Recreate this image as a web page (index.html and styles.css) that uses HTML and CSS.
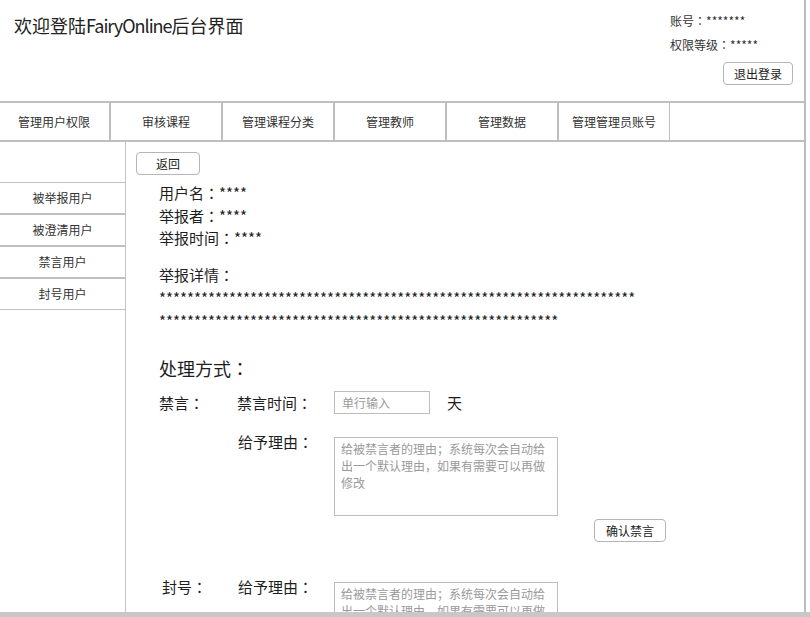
FILE: index.html
```html
<!DOCTYPE html>
<html lang="zh-CN">
<head>
<meta charset="utf-8">
<title>FairyOnline后台</title>
<link rel="stylesheet" href="styles.css">
</head>
<body>
<div class="page">
  <header class="header">
    <h1 class="title">欢迎登陆<span class="latin">FairyOnline</span>后台界面</h1>
    <div class="account">
      <div class="account-line">账号<span class="c" lang="zh-TW">：</span>*******</div>
      <div class="account-line">权限等级<span class="c" lang="zh-TW">：</span>*****</div>
      <div class="account-actions"><button class="btn btn-logout">退出登录</button></div>
    </div>
  </header>
  <nav class="nav">
    <ul class="nav-list">
      <li class="nav-item">管理用户权限</li>
      <li class="nav-item">审核课程</li>
      <li class="nav-item">管理课程分类</li>
      <li class="nav-item">管理教师</li>
      <li class="nav-item">管理数据</li>
      <li class="nav-item">管理管理员账号</li>
    </ul>
  </nav>
  <div class="body">
    <aside class="sidebar">
      <div class="side-item">被举报用户</div>
      <div class="side-item">被澄清用户</div>
      <div class="side-item">禁言用户</div>
      <div class="side-item">封号用户</div>
    </aside>
    <main class="main">
      <button class="btn btn-back">返回</button>
      <section class="report">
        <div class="info-line">用户名<span class="c" lang="zh-TW">：</span>****</div>
        <div class="info-line">举报者<span class="c" lang="zh-TW">：</span>****</div>
        <div class="info-line">举报时间<span class="c" lang="zh-TW">：</span>****</div>
        <div class="info-line detail-title">举报详情<span class="c" lang="zh-TW">：</span></div>
        <div class="stars">********************************************************************</div>
        <div class="stars">*********************************************************</div>
      </section>
      <section class="handle">
        <div class="handle-title">处理方式<span class="c" lang="zh-TW">：</span></div>
        <div class="row row-mute">
          <span class="label-main">禁言<span class="c" lang="zh-TW">：</span></span>
          <span class="label-sub">禁言时间<span class="c" lang="zh-TW">：</span></span>
          <input class="field-input" type="text" placeholder="单行输入">
          <span class="unit">天</span>
        </div>
        <div class="row row-reason">
          <span class="label-main"></span>
          <span class="label-sub label-reason">给予理由<span class="c" lang="zh-TW">：</span></span>
          <textarea class="field-area" placeholder="给被禁言者的理由；系统每次会自动给出一个默认理由，如果有需要可以再做修改"></textarea>
        </div>
        <div class="confirm-row"><button class="btn btn-confirm">确认禁言</button></div>
        <div class="row row-ban">
          <span class="label-main label-ban">封号<span class="c" lang="zh-TW">：</span></span>
          <span class="label-sub label-reason">给予理由<span class="c" lang="zh-TW">：</span></span>
          <textarea class="field-area" placeholder="给被禁言者的理由；系统每次会自动给出一个默认理由，如果有需要可以再做修改"></textarea>
        </div>
      </section>
    </main>
  </div>
</div>
<div class="bottom-bar"></div>
</body>
</html>
```

FILE: styles.css
```css
html, body {
  margin: 0;
  padding: 0;
  height: 617px;
  overflow: hidden;
  background: #fff;
}
body {
  font-family: "Noto Sans CJK SC", "Noto Sans", "Liberation Sans", sans-serif;
  color: #222;
  display: flex;
  flex-direction: column;
}
.c {
  font-family: "Noto Sans CJK TC", "Noto Sans CJK SC", sans-serif;
}
.page {
  width: 804px;
  height: 612px;
  border-right: 2px solid #bdbdbd;
  overflow: hidden;
  display: flex;
  flex-direction: column;
  flex: none;
}
.bottom-bar {
  height: 5px;
  background: #c8c8c8;
  flex: none;
}
.header {
  height: 101px;
  border-bottom: 2px solid #bfbfbf;
  display: flex;
  justify-content: space-between;
  flex: none;
}
.title {
  margin: 0;
  padding: 13px 0 0 14px;
  font-size: 18px;
  line-height: 24px;
  font-weight: normal;
  color: #222;
}
.latin {
  letter-spacing: -1px;
}
.account {
  width: 123px;
  padding: 9px 11px 0 0;
  font-size: 12px;
  color: #333;
}
.account-line {
  line-height: 24px;
}
.account-actions {
  display: flex;
  justify-content: flex-end;
  margin-top: 5px;
}
.btn {
  font-family: inherit;
  font-size: 12px;
  color: #222;
  background: #fff;
  border: 1px solid #b5b5b5;
  border-radius: 4px;
  padding: 0;
  height: 23px;
  line-height: 21px;
  cursor: pointer;
}
.btn-logout { width: 70px; }
.nav {
  height: 37px;
  border-bottom: 2px solid #bfbfbf;
  flex: none;
}
.nav-list {
  list-style: none;
  margin: 0 0 0 -2px;
  padding: 0;
  display: flex;
  height: 37px;
}
.nav-item {
  width: 110px;
  border-left: 1px solid #bdbdbd;
  border-right: 1px solid #bdbdbd;
  text-align: center;
  line-height: 37px;
  font-size: 12px;
  color: #333;
}
.body {
  flex: 1;
  display: flex;
  min-height: 0;
}
.sidebar {
  width: 125px;
  border-right: 1px solid #c4c4c4;
  padding-top: 40px;
  flex: none;
}
.side-item {
  height: 30px;
  line-height: 30px;
  border-top: 1px solid #c0c0c0;
  border-bottom: 1px solid #c0c0c0;
  text-align: center;
  font-size: 12px;
  color: #333;
}
.main {
  flex: 1;
  padding: 10px 0 0 10px;
}
.btn-back {
  width: 64px;
  display: block;
}
.report {
  margin: 7px 0 0 23px;
  font-size: 15px;
  color: #1e1e1e;
}
.info-line {
  line-height: 22.5px;
}
.detail-title {
  margin-top: 13px;
  line-height: 23px;
}
.stars {
  line-height: 23px;
  white-space: nowrap;
}
.handle {
  margin: 23px 0 0 23px;
  color: #1e1e1e;
}
.handle-title {
  font-size: 18px;
  line-height: 26px;
}
.row {
  display: flex;
  font-size: 15px;
  line-height: 23px;
}
.row-mute {
  margin-top: 10px;
  align-items: center;
}
.label-main {
  width: 78px;
  flex: none;
}
.label-ban {
  width: 79px;
  padding-left: 3px;
  box-sizing: border-box;
}
.label-sub {
  width: 97px;
  flex: none;
}
.label-reason {
  width: 96px;
}
.row-reason .label-main { width: 79px; }
.field-input {
  width: 96px;
  height: 23px;
  box-sizing: border-box;
  border: 1px solid #bdbdbd;
  padding: 0 7px;
  font-family: inherit;
  font-size: 12px;
  color: #333;
  margin: 0;
  outline: none;
}
.field-input::placeholder { color: #9a9a9a; }
.unit {
  margin-left: 17px;
}
.row-reason {
  margin-top: 16px;
  align-items: flex-start;
}
.field-area {
  width: 224px;
  height: 79px;
  box-sizing: border-box;
  margin: 7.5px 0 0;
  border: 1px solid #bdbdbd;
  padding: 2px 6px;
  font-family: inherit;
  font-size: 12px;
  line-height: 17px;
  resize: none;
  outline: none;
  overflow: hidden;
  color: #333;
}
.field-area::placeholder { color: #9a9a9a; }
.confirm-row {
  margin-top: 1px;
  padding-left: 435px;
}
.btn-confirm { width: 72px; }
.row-ban {
  margin-top: 32.5px;
  align-items: flex-start;
}
```
